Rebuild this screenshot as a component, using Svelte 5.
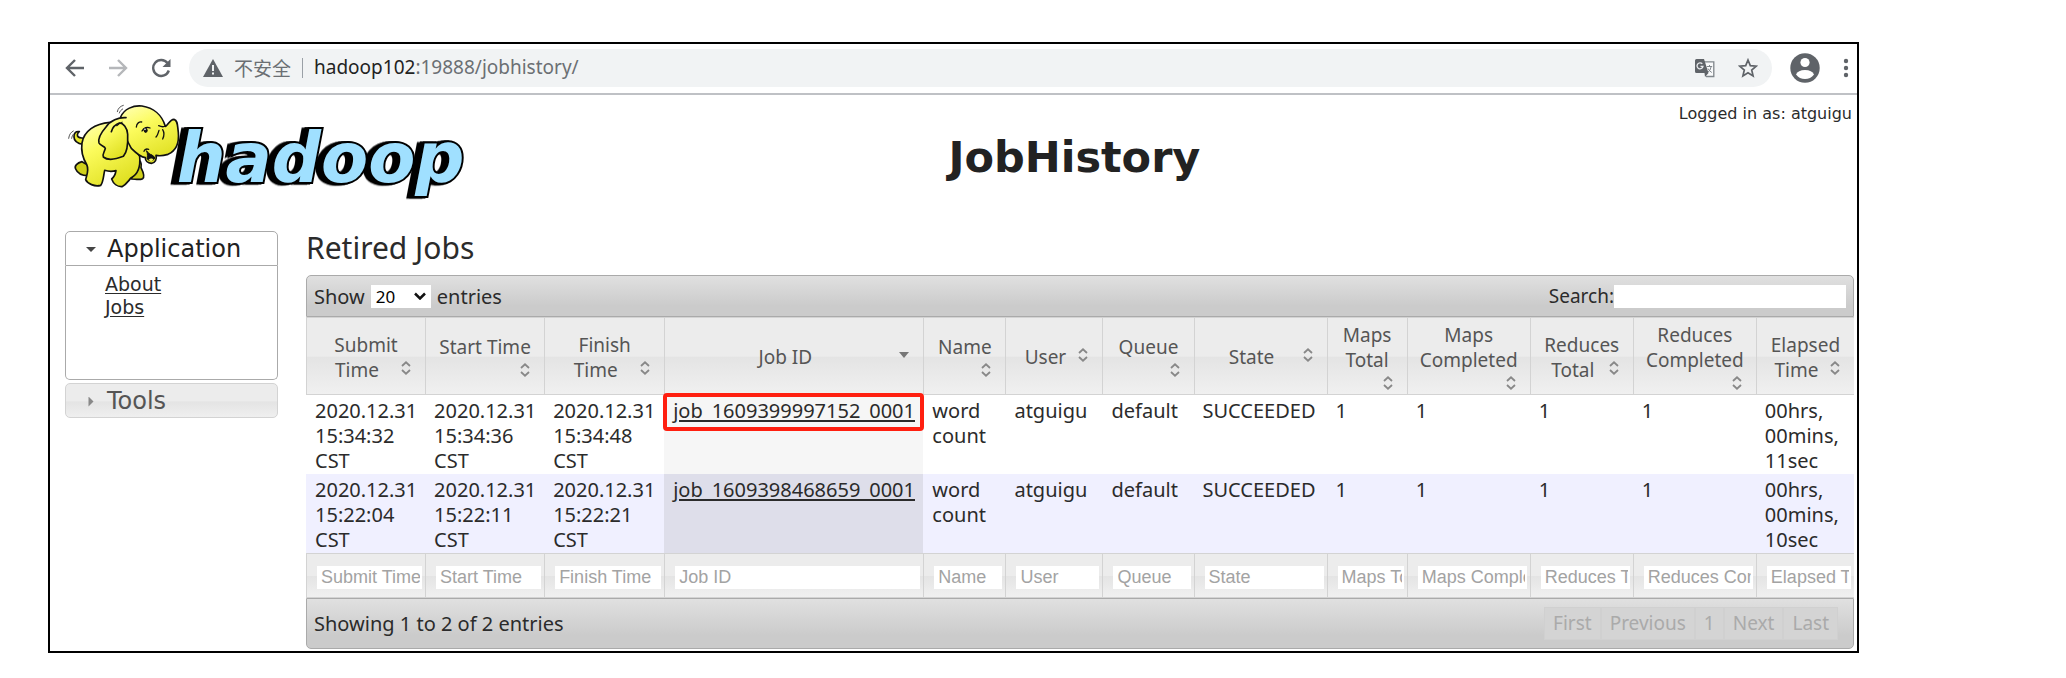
<script>
  const columns = [
    { name: 'Submit Time', w: 119 },
    { name: 'Start Time', w: 119 },
    { name: 'Finish Time', w: 120 },
    { name: 'Job ID', w: 259, sorted: true },
    { name: 'Name', w: 82 },
    { name: 'User', w: 97 },
    { name: 'Queue', w: 91 },
    { name: 'State', w: 133 },
    { name: 'Maps Total', w: 80 },
    { name: 'Maps Completed', w: 123 },
    { name: 'Reduces Total', w: 103 },
    { name: 'Reduces Completed', w: 123 },
    { name: 'Elapsed Time', w: 98 }
  ];
  const total = columns.reduce((sum, c) => sum + c.w, 0);
  const jobs = [
    ['2020.12.31 15:34:32 CST', '2020.12.31 15:34:36 CST', '2020.12.31 15:34:48 CST', 'job_1609399997152_0001', 'word count', 'atguigu', 'default', 'SUCCEEDED', '1', '1', '1', '1', '00hrs, 00mins, 11sec'],
    ['2020.12.31 15:22:04 CST', '2020.12.31 15:22:11 CST', '2020.12.31 15:22:21 CST', 'job_1609398468659_0001', 'word count', 'atguigu', 'default', 'SUCCEEDED', '1', '1', '1', '1', '00hrs, 00mins, 10sec']
  ];
  const pages = ['First', 'Previous', '1', 'Next', 'Last'];
</script>

<div class="window">
  <div class="browser">
    <div class="history">
      <button class="nav" aria-label="Back">
        <svg width="20" height="20" viewBox="0 0 20 20"><path class="line" d="M19 10H2M10 2L2 10l8 8" /></svg>
      </button>
      <button class="nav dim" aria-label="Forward">
        <svg width="20" height="20" viewBox="0 0 20 20"><path class="line" d="M1 10h17M10 2l8 8-8 8" /></svg>
      </button>
      <button class="nav" aria-label="Reload">
        <svg width="20" height="20" viewBox="0 0 20 20"><path class="line" d="M16.500 5A8 8 0 1 0 17.800 12.500" /><path fill="#5f6368" d="M19.500 1v8h-8z" /></svg>
      </button>
    </div>
    <div class="address">
      <svg width="20" height="18" viewBox="0 0 20 18"><path d="M10 0L20 18H0z" fill="#5f6368" /><path d="M9 6h2v6H9zM9 13.500h2v2H9z" fill="#f1f3f4" /></svg>
      <span class="unsafe">不安全</span>
      <span class="bar"></span>
      <span class="url"><b>hadoop102</b>:19888/jobhistory/</span>
      <button class="nav translate" aria-label="Translate">
        <svg width="20" height="20" viewBox="0 0 20 20" fill="none">
          <path d="M9 3.800h9.800V18.500H11" fill="#f8f9fa" stroke="#80868b" stroke-width="1.300" />
          <path fill="#5f6368" d="M1.500 1H9l4.500 14H1.500Q0 15 0 13.500v-11Q0 1 1.500 1zM9.500 15h4l-3.500 4z" />
          <path d="M7.300 5.800A3 3 0 1 0 8 8.300H5.500" stroke="#e8eaed" stroke-width="1.300" />
          <path d="M11.800 8.500h5.400M14.500 7v1.500M16.200 8.500q-.7 4-3 5.500M13 10.500q1.300 2.500 3.800 4" stroke="#80868b" stroke-width="1" />
        </svg>
      </button>
      <button class="nav" aria-label="Bookmark">
        <svg width="20" height="20" viewBox="0 0 20 20"><path fill="none" stroke="#5f6368" stroke-width="1.700" d="M10 2l2.300 5.600 6 .5-4.600 3.900 1.400 5.900L10 14.800l-5.100 3.100L6.300 12 1.700 8.100l6-.5z" /></svg>
      </button>
    </div>
    <div class="account">
      <button class="nav" aria-label="Profile">
        <svg width="30" height="30" viewBox="0 0 30 30"><circle cx="15" cy="15" r="14.700" fill="#5f6368" /><circle cx="15" cy="9.500" r="4.600" fill="#fff" /><path d="M6 21.500q2-4.500 9-4.500t9 4.500q-3.500 4.500-9 4.500t-9-4.500z" fill="#fff" /></svg>
      </button>
      <button class="nav" aria-label="Menu">
        <svg width="6" height="20" viewBox="0 0 6 20" fill="#5f6368"><circle cx="3" cy="3" r="2.200" /><circle cx="3" cy="10" r="2.200" /><circle cx="3" cy="17" r="2.200" /></svg>
      </button>
    </div>
  </div>

  <header>
    <svg class="logo" width="410" height="110" viewBox="0 0 1230 330" role="img" aria-label="Hadoop">
      <defs>
        <linearGradient id="hide" x1="0.2" y1="0" x2="0.7" y2="1">
          <stop offset="0" stop-color="#ffffa8" /><stop offset="0.35" stop-color="#fbfb5c" /><stop offset="1" stop-color="#dede1e" />
        </linearGradient>
      </defs>
      <text class="word" x="350" y="261">hadoop</text>
      <g stroke="#111" stroke-width="5" stroke-linejoin="round" stroke-linecap="round">
        <path fill="#cfcf1a" d="M66 200C52 204 42 212 47 222C52 234 66 242 84 242L90 214Z" />
        <path fill="#cfcf1a" d="M232 200C240 190 246 206 243 218C250 232 254 246 248 251C238 256 226 252 214 252Z" />
        <path fill="#e8e82a" d="M70 148C54 146 42 138 42 126C41 114 48 108 58 110C52 114 50 122 55 126C60 130 66 128 74 130Z" />
        <path fill="url(#hide)" d="M150 82C104 86 72 108 66 144C62 172 70 192 80 208C88 226 80 240 77 254C82 266 104 276 122 271C130 262 130 244 134 226C146 230 158 230 168 227C166 240 160 248 155 252C160 266 172 276 186 275C200 268 206 256 214 248C232 238 242 216 239 184L214 150L190 80Z" />
        <path fill="url(#hide)" d="M182 66C192 42 220 30 246 33C280 38 306 60 316 94C324 92 328 74 342 73C354 76 352 92 355 112C358 144 346 168 324 178C308 183 296 183 288 181C291 192 286 204 274 205C262 204 256 196 256 188C240 186 226 172 214 160C196 130 186 100 182 66Z" />
        <path fill="#111" stroke-width="3" d="M260 168C264 178 262 186 261 191C268 200 282 198 284 189C284 184 280 184 276 180C270 178 264 174 260 168Z" />
        <path fill="#f4f45a" stroke="none" d="M266 194C270 189 278 189 280 194C276 200 270 199 266 194Z" />
        <path fill="url(#hide)" d="M198 68C176 66 150 78 138 96C124 112 114 132 117 144C120 152 134 152 136 160C134 170 126 178 130 186C144 198 170 192 190 184C204 170 204 142 203 118C202 98 190 84 178 84C166 88 158 96 154 110" />
        <path fill="none" stroke-width="4" d="M229 96C230 84 238 80 245 81M246 108C252 98 262 95 270 99M252 169C254 163 260 161 266 163M296 92C304 96 312 96 318 93M297 106C294 116 292 122 288 126M308 104C314 114 312 124 308 132M170 92L180 84" />
        <path fill="none" stroke="#555" stroke-width="3" d="M26 130C28 118 32 112 40 108M35 130C36 124 38 120 40 118M172 50C174 40 180 34 190 31M178 54C180 48 184 44 188 42" />
        <ellipse cx="257" cy="106" rx="6" ry="8" fill="#111" stroke="none" />
        <circle cx="255" cy="103" r="2.500" fill="#fff" stroke="none" />
      </g>
    </svg>
    <h1>JobHistory</h1>
    <p>Logged in as: atguigu</p>
  </header>

  <div class="page">
    <nav>
      <button class="fold open"><span class="tri down"></span>Application</button>
      <ul>
        <li><a href="#about">About</a></li>
        <li><a href="#jobs">Jobs</a></li>
      </ul>
      <button class="fold"><span class="tri"></span>Tools</button>
    </nav>

    <main>
      <h2>Retired Jobs</h2>
      <div class="toolbar top">
        <label>Show
          <span class="pick">
            <select><option>20</option></select>
            <svg width="12" height="8" viewBox="0 0 12 8"><path d="M1 1.500l5 5 5-5" fill="none" stroke="#111" stroke-width="2.500" /></svg>
          </span>
          entries</label>
        <label class="search">Search:<input type="text" /></label>
      </div>
      <table>
        <colgroup>
          {#each columns as c}<col style="width: {(c.w / total) * 100}%" />{/each}
        </colgroup>
        <thead>
          <tr>
            {#each columns as c}
              <th scope="col">
                {c.name}<span class="sort">
                  {#if c.sorted}
                    <svg width="10" height="6" viewBox="0 0 10 6"><path d="M0 0h10L5 6z" fill="#777" /></svg>
                  {:else}
                    <svg width="10" height="14" viewBox="0 0 10 14"><path d="M1 5l4-3.700L9 5M1 9l4 3.700L9 9" fill="none" stroke="#888" stroke-width="1.800" /></svg>
                  {/if}
                </span>
              </th>
            {/each}
          </tr>
        </thead>
        <tbody>
          {#each jobs as job, r}
            <tr>
              {#each job as value, i}
                {#if i === 3}
                  <td class="id" class:marked={r === 0}><a href="#{value}">{value}</a></td>
                {:else}
                  <td>{value}</td>
                {/if}
              {/each}
            </tr>
          {/each}
        </tbody>
        <tfoot>
          <tr>
            {#each columns as c}
              <td><input type="text" placeholder={c.name} aria-label={c.name} /></td>
            {/each}
          </tr>
        </tfoot>
      </table>
      <div class="toolbar bottom">
        <span>Showing 1 to 2 of 2 entries</span>
        <div class="pages">
          {#each pages as p}<button disabled>{p}</button>{/each}
        </div>
      </div>
    </main>
  </div>
</div>

<style>
  :global(body) {
    background: #fff;
  }
  *,
  *::after {
    box-sizing: border-box;
  }
  .window {
    margin: 42px 207px 0 48px;
    border: 2px solid #000;
    font-family: 'Noto Sans', sans-serif;
    font-size: 19px;
    line-height: 25px;
    color: #2b2b2b;
  }
  button,
  input,
  select {
    font: inherit;
    color: inherit;
    border: 0;
    padding: 0;
    margin: 0;
    background: none;
  }
  .browser {
    display: flex;
    align-items: center;
    gap: 18px;
    height: 51px;
    padding: 0 8px 2px 15px;
    border-bottom: 2px solid #bfc1c5;
  }
  .history,
  .account {
    display: flex;
    align-items: center;
    gap: 23px;
  }
  .nav {
    display: flex;
    flex: none;
  }
  .line {
    fill: none;
    stroke: #5f6368;
    stroke-width: 2.4;
  }
  .dim .line {
    stroke: #b5b7ba;
  }
  .address {
    flex: 1;
    display: flex;
    align-items: center;
    height: 38px;
    padding: 0 14px;
    gap: 11px;
    border-radius: 19px;
    background: #f1f3f4;
    color: #6b6f73;
  }
  .unsafe {
    font-family: 'Noto Sans CJK SC', sans-serif;
  }
  .bar {
    width: 1px;
    height: 20px;
    background: #9aa0a6;
  }
  .url {
    flex: 1;
  }
  .url b {
    font-weight: 400;
    color: #222;
  }
  .translate {
    margin-right: 12px;
  }
  header {
    display: grid;
    grid-template-columns: 410px 1fr auto;
    padding: 0 5px 0 10px;
    height: 120px;
  }
  .logo {
    display: block;
  }
  .word {
    font-family: 'DejaVu Sans', sans-serif;
    font-weight: 700;
    font-style: oblique;
    font-size: 206px;
    fill: #a0e0ff;
    stroke: #000;
    stroke-width: 12px;
    paint-order: stroke;
    filter: drop-shadow(-9px 1px 0 #000) drop-shadow(-9px 1px 0 #000);
  }
  h1 {
    margin: 40px 0 0;
    font-family: 'DejaVu Sans', sans-serif;
    font-size: 43px;
    line-height: 44px;
    text-align: center;
    color: #222;
  }
  header p {
    margin: 6px 0 0;
    font-family: 'DejaVu Sans', sans-serif;
    font-size: 16px;
    text-align: right;
  }
  .page {
    display: grid;
    grid-template-columns: 213px 1fr;
    gap: 28px;
    padding: 16px 3px 2px 15px;
  }
  nav {
    font-family: 'DejaVu Sans', sans-serif;
  }
  .fold {
    display: flex;
    align-items: center;
    gap: 11px;
    width: 100%;
    height: 35px;
    padding: 2px 0 0 20px;
    border: 1px solid #d3d3d3;
    border-radius: 5px;
    font-size: 24px;
    color: #555;
    background: linear-gradient(#ececec 50%, #e4e4e4 55%, #efefef);
  }
  .fold.open {
    border-color: #aaa;
    border-radius: 5px 5px 0 0;
    background: #fff;
    color: #212121;
  }
  .tri {
    width: 10px;
    height: 10px;
    background: #888;
    clip-path: polygon(25% 0, 75% 50%, 25% 100%);
  }
  .down {
    background: #454545;
    clip-path: polygon(0 25%, 100% 25%, 50% 75%);
  }
  ul {
    height: 114px;
    margin: 0 0 3px;
    padding: 7px 0 0 39px;
    list-style: none;
    line-height: 23px;
    border: 1px solid #aaa;
    border-top: 0;
    border-radius: 0 0 5px 5px;
  }
  a {
    color: inherit;
    text-underline-offset: 2px;
  }
  h2 {
    margin: 0;
    height: 44px;
    font-size: 30px;
    line-height: 34px;
    font-weight: 400;
  }
  .toolbar {
    display: flex;
    align-items: center;
    justify-content: space-between;
    height: 42px;
    padding: 0 7px;
    border: 1px solid #aaa;
    font-size: 20px;
    background: linear-gradient(#e0e0e0, #cbcbcb 75%);
  }
  .top {
    border-radius: 5px 5px 0 0;
  }
  .bottom {
    height: 51px;
    border-radius: 0 0 5px 5px;
  }
  label {
    display: flex;
    align-items: center;
    gap: 6px;
  }
  .pick {
    display: flex;
    align-items: center;
    width: 60px;
    height: 23px;
    padding: 0 5px;
    background: #fff;
    color: #000;
  }
  .pick select {
    flex: 1;
    min-width: 0;
    appearance: none;
    font-size: 17px;
  }
  .pick svg {
    flex: none;
  }
  .search {
    gap: 0;
    font-size: 19px;
  }
  .search input {
    width: 232px;
    height: 23px;
    background: #fff;
  }
  table {
    width: 100%;
    table-layout: fixed;
    border-spacing: 0;
  }
  th {
    height: 78px;
    padding: 4px 10px 1px;
    font-weight: 400;
    color: #555;
    vertical-align: middle;
  }
  th,
  tfoot td {
    border: 1px solid #d3d3d3;
    border-width: 1px 0 1px 1px;
    background: linear-gradient(#ececec 50%, #e4e4e4 52%, #f0f0f0);
  }
  .sort {
    float: right;
    display: flex;
    align-items: center;
    justify-content: center;
    width: 18px;
    height: 20px;
  }
  tbody td {
    height: 79px;
    padding: 3px 0 1px 9px;
    font-size: 20px;
    vertical-align: top;
  }
  tbody tr:nth-child(2) {
    background: #f0f0ff;
  }
  tbody .id {
    position: relative;
    background: #f6f6f6;
  }
  tbody tr:nth-child(2) .id {
    background: #dedeea;
  }
  .marked::after {
    content: '';
    position: absolute;
    inset: -2px -1px auto -1px;
    height: 38px;
    border: 4px solid #ff1f10;
    border-radius: 4px;
  }
  tfoot td {
    height: 45px;
    padding: 4px 3px 0 10px;
  }
  tfoot input {
    display: block;
    width: 100%;
    height: 23px;
    padding: 0 2px 0 4px;
    background: #fff;
    font-family: 'Liberation Sans', sans-serif;
    font-size: 18px;
  }
  tfoot input::placeholder {
    color: #a3a3a3;
  }
  .pages {
    display: flex;
    padding-right: 8px;
    font-size: 19px;
  }
  .pages button {
    height: 33px;
    padding: 0 8px;
    border: 1px solid #d0d0d0;
    background: #d4d4d4;
    color: #aaa;
  }
</style>
